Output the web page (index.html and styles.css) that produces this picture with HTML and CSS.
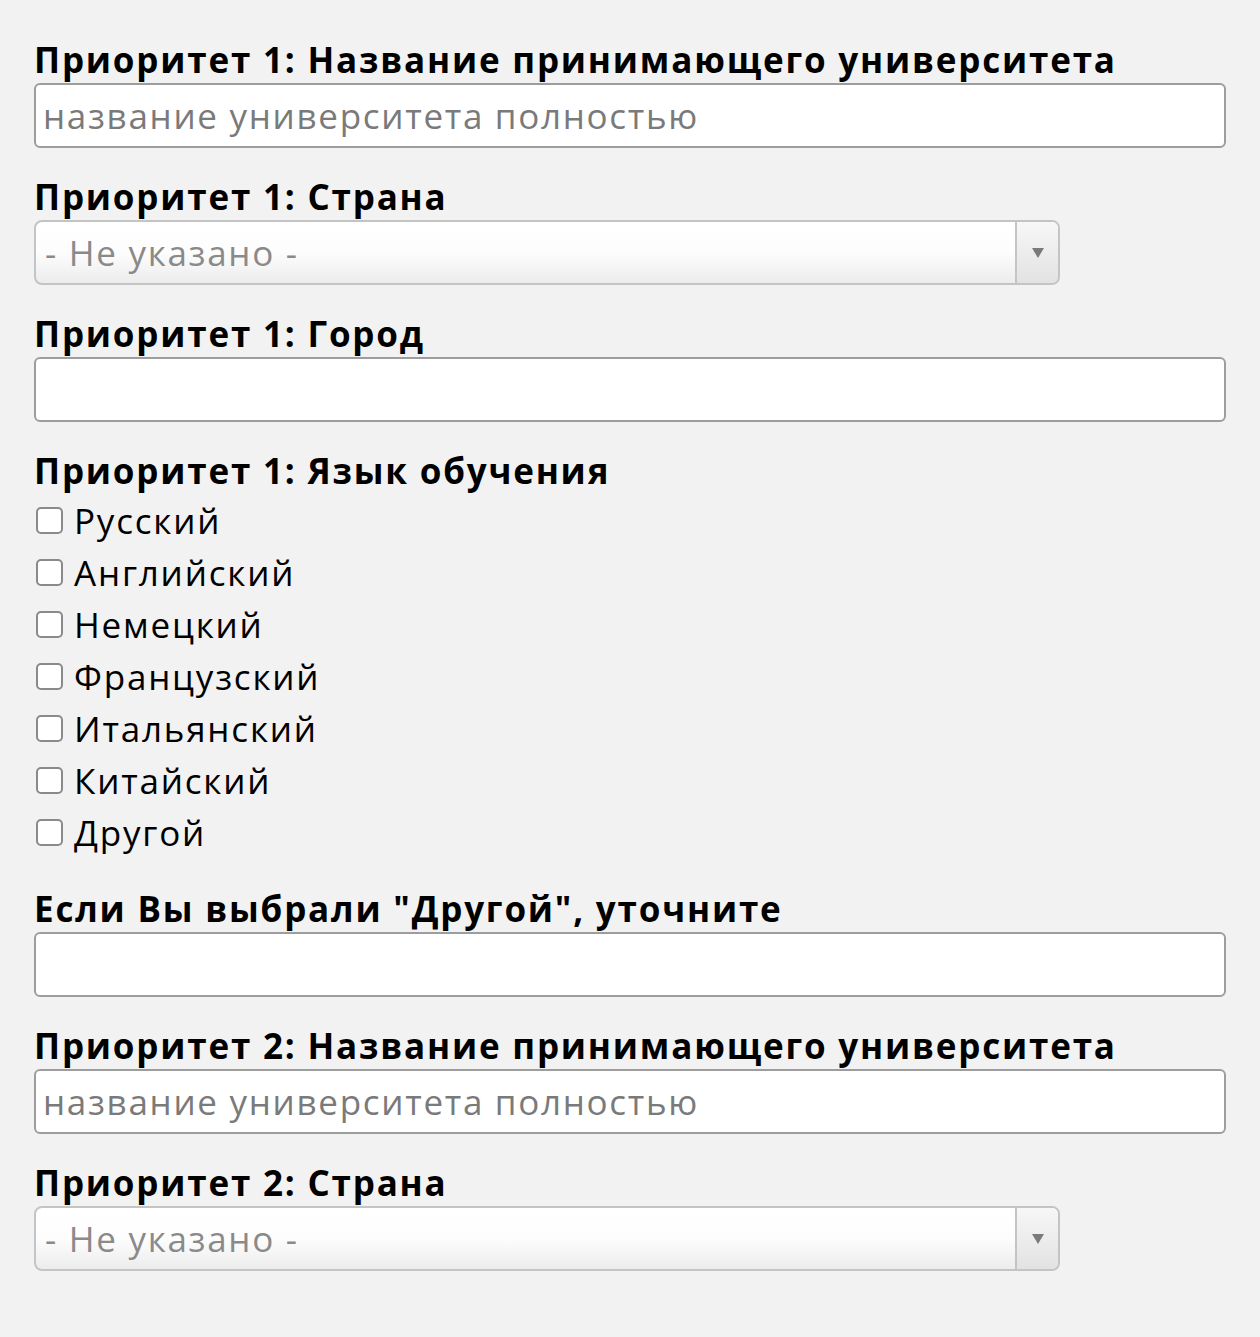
FILE: index.html
```html
<!DOCTYPE html>
<html>
<head lang="ru">
    <meta charset="UTF-8">
    <title>Анкета</title>
    <link rel="stylesheet" href="styles.css">
</head>
<body>
<div id="form">
    <div class="field">
        <label class="title">Приоритет 1: Название принимающего университета</label>
        <input class="text" type="text" placeholder="название университета полностью">
    </div>
    <div class="field">
        <label class="title">Приоритет 1: Страна</label>
        <div class="select">
            <span class="value">- Не указано -</span>
            <span class="arrow"></span>
        </div>
    </div>
    <div class="field">
        <label class="title">Приоритет 1: Город</label>
        <input class="text" type="text">
    </div>
    <div class="field">
        <label class="title">Приоритет 1: Язык обучения</label>
        <ul class="checks">
            <li><input type="checkbox"><span>Русский</span></li>
            <li><input type="checkbox"><span>Английский</span></li>
            <li><input type="checkbox"><span>Немецкий</span></li>
            <li><input type="checkbox"><span>Французский</span></li>
            <li><input type="checkbox"><span>Итальянский</span></li>
            <li><input type="checkbox"><span>Китайский</span></li>
            <li><input type="checkbox"><span>Другой</span></li>
        </ul>
    </div>
    <div class="field">
        <label class="title">Если Вы выбрали "Другой", уточните</label>
        <input class="text" type="text">
    </div>
    <div class="field">
        <label class="title">Приоритет 2: Название принимающего университета</label>
        <input class="text" type="text" placeholder="название университета полностью">
    </div>
    <div class="field">
        <label class="title">Приоритет 2: Страна</label>
        <div class="select">
            <span class="value">- Не указано -</span>
            <span class="arrow"></span>
        </div>
    </div>
</div>
</body>
</html>
```

FILE: styles.css
```css
*{
    margin: 0;
    padding: 0;
    box-sizing: border-box;
}
body{
    background: #f2f2f2;
    font-family: "Open Sans", "Liberation Sans", sans-serif;
    color: #000;
}
ul{
    list-style: none;
}
#form{
    padding: 37px 34px 0 34px;
}
.field{
    margin-bottom: 26px;
}
.title{
    display: block;
    font-size: 35px;
    font-weight: bold;
    line-height: 46px;
    letter-spacing: 1.8px;
}
.text{
    display: block;
    width: 1192px;
    height: 65px;
    border: 2px solid #9d9d9d;
    border-radius: 6px;
    background: #fff;
    padding: 0 7px;
    font-family: "Open Sans", "Liberation Sans", sans-serif;
    font-size: 35px;
    letter-spacing: 1.7px;
    color: #000;
}
.text::placeholder{
    color: #7a7a7a;
}
.select{
    display: flex;
    width: 1026px;
    height: 65px;
    border: 2px solid #c4c4c4;
    border-radius: 8px;
    background: linear-gradient(#fff, #fdfdfd 50%, #ececec);
    overflow: hidden;
}
.select .value{
    flex: 1;
    padding-left: 9px;
    font-size: 35px;
    letter-spacing: 1.7px;
    line-height: 61px;
    color: #8a8a8a;
}
.select .arrow{
    width: 43px;
    border-left: 2px solid #c4c4c4;
    background: linear-gradient(#f7f7f7, #e2e2e2);
    display: flex;
    align-items: center;
    justify-content: center;
}
.select .arrow:after{
    content: "";
    border-left: 6px solid transparent;
    border-right: 6px solid transparent;
    border-top: 10px solid #7a7a7a;
}
.checks{
    padding-bottom: 2px;
}
.checks li{
    display: flex;
    align-items: center;
    height: 52px;
    font-size: 35px;
    letter-spacing: 1.8px;
}
.checks input{
    appearance: none;
    -webkit-appearance: none;
    width: 27px;
    height: 27px;
    margin: 0 11px 0 2px;
    border: 2px solid #8a8a8a;
    border-radius: 5px;
    background: #fff;
}
```
